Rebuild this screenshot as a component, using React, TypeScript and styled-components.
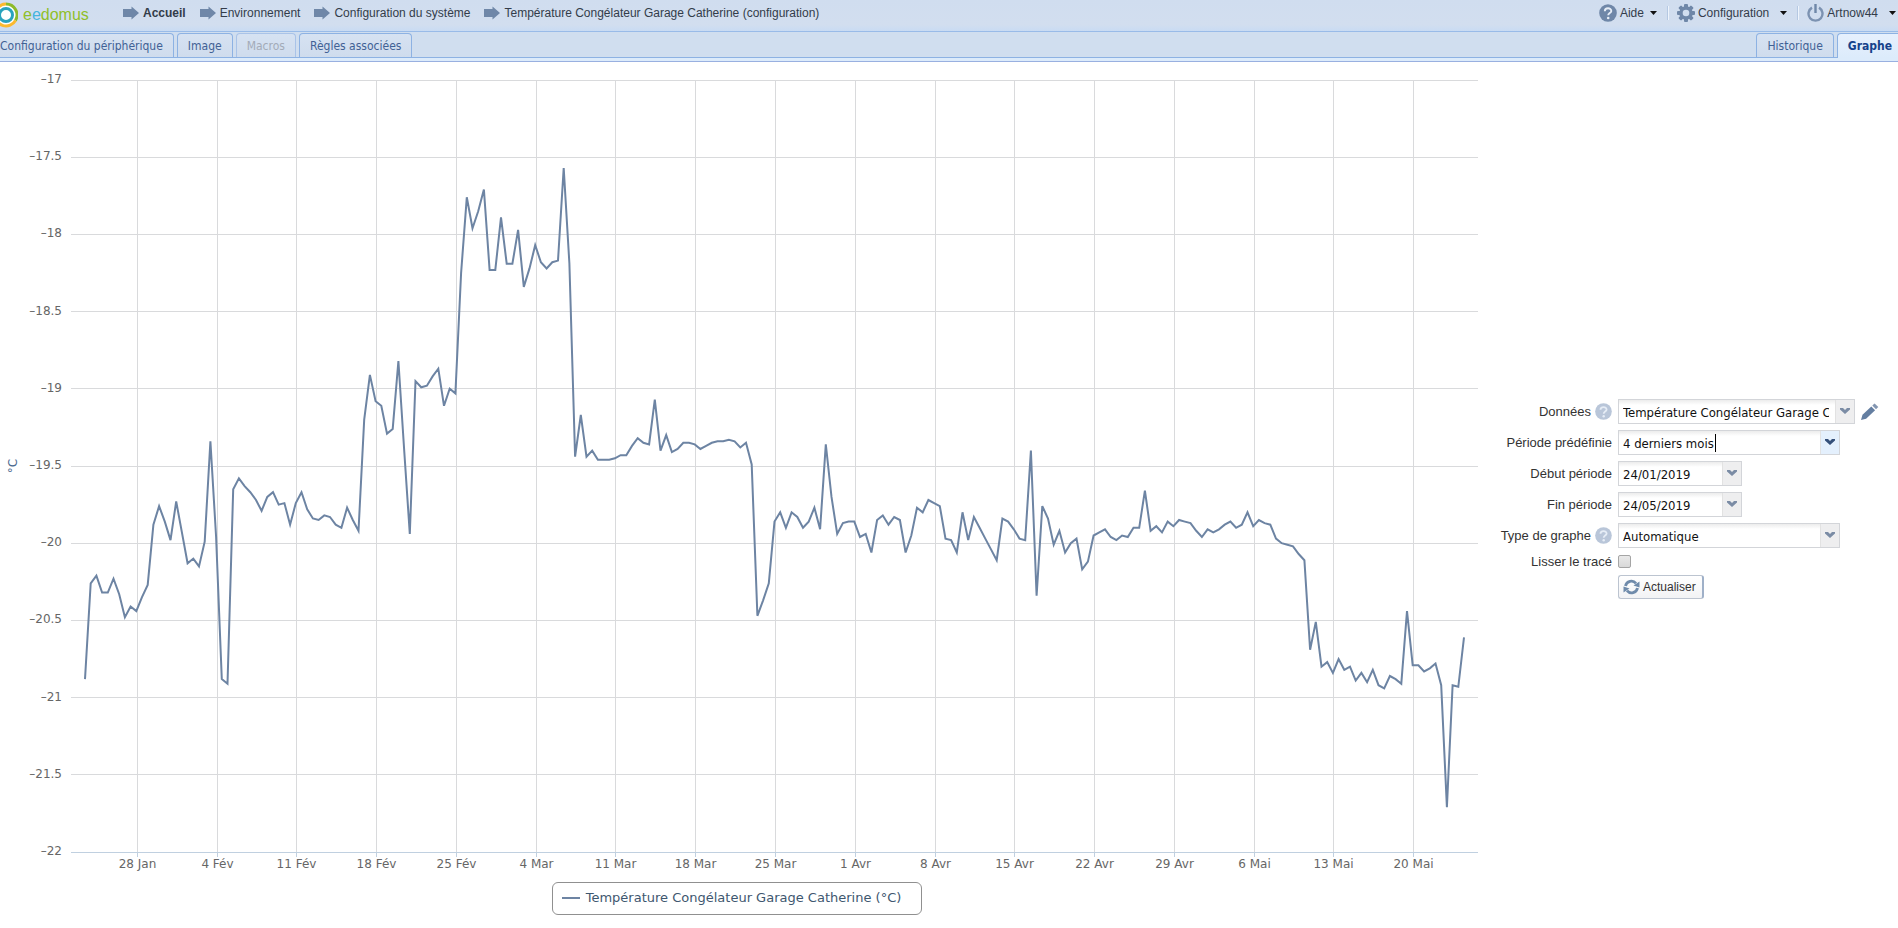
import React, { useLayoutEffect, useRef, useState } from 'react';
import styled, { createGlobalStyle, css } from 'styled-components';

const SANS = '"Liberation Sans", Arial, sans-serif';
const TAHOMA = '"DejaVu Sans Condensed", Tahoma, "DejaVu Sans", sans-serif';
const LUCIDA = '"DejaVu Sans", "Lucida Sans Unicode", sans-serif';
const STEEL = '#6d84a3';

const GlobalStyle = createGlobalStyle`
  * { box-sizing: border-box; }
  html, body { margin: 0; background: #fff; }
  body { overflow: hidden; font-family: ${SANS}; }
  button, input, select { font: inherit; color: inherit; margin: 0; }
`;

/* ---------- page frame ---------- */

const Page = styled.div`
  display: flex;
  flex-direction: column;
  min-height: 100vh;
`;

const Header = styled.header`
  display: flex;
  align-items: center;
  height: 32px;
  padding-bottom: 6px;
  background: linear-gradient(#d0ddef, #d2deef 80%, #c9dbf3);
  border-bottom: 1px solid #99bbe8;
  font-size: 12px;
  color: #333c4a;
`;

const Brand = styled.a`
  display: flex;
  align-items: center;
  gap: 5px;
  width: 123px;
  height: 31px;
  padding-top: 4px;
  font-size: 16px;
  color: #8fbf2a;
  text-decoration: none;
`;

const BrandBlue = styled.span`
  color: #45b4e0;
`;

const Crumbs = styled.nav`
  display: flex;
  gap: 14px;
  flex: 1;
`;

const Crumb = styled.a<{ $strong?: boolean }>`
  display: flex;
  align-items: center;
  gap: 4px;
  color: inherit;
  text-decoration: none;
  font-weight: ${(p) => (p.$strong ? 'bold' : 'normal')};
`;

const Tools = styled.div`
  display: flex;
  align-items: center;
  padding-right: 2px;
`;

const ToolButton = styled.button<{ $wide?: boolean }>`
  display: flex;
  align-items: center;
  gap: 3px;
  padding: 0;
  border: 0;
  background: none;

  & > svg:last-child {
    margin-left: ${(p) => (p.$wide ? '8px' : '3px')};
  }
`;

const Separator = styled.span`
  width: 2px;
  height: 14px;
  margin: 0 8px 0 10px;
  border-left: 1px solid #b5c8e2;
  border-right: 1px solid #eef4fc;
`;

/* ---------- tabs ---------- */

const TabBar = styled.nav`
  display: flex;
  align-items: flex-end;
  height: 30px;
  padding-bottom: 3px;
  background: linear-gradient(#d0deef 26px, #dcebfb 26px);
  border-bottom: 1px solid #99b0e0;
  font-family: ${TAHOMA};
  font-size: 12px;
`;

const TabGroup = styled.div<{ $grow?: boolean }>`
  display: flex;
  align-items: flex-end;
  gap: 3px;
  height: 26px;
  flex: ${(p) => (p.$grow ? '1' : 'none')};
  border-bottom: 1px solid #8db2e3;
`;

const Tab = styled.button<{ $active?: boolean; $edge?: 'left' | 'right' }>`
  height: 24px;
  padding: 0 10px;
  border: 1px solid #8db2e3;
  border-bottom: 0;
  border-radius: 4px 4px 0 0;
  background: linear-gradient(#d6e2f2, #cfdced);
  color: #416195;
  white-space: nowrap;

  &:disabled {
    color: #a3abb8;
    border-color: #a9c3e8;
  }

  ${(p) => p.$edge === 'left' && css`
    padding-left: 0;
    border-left: 0;
    border-top-left-radius: 0;
  `}

  ${(p) => p.$edge === 'right' && css`
    padding-right: 6px;
    border-right: 0;
    border-top-right-radius: 0;
  `}

  ${(p) => p.$active && css`
    height: 25px;
    margin-bottom: -1px;
    background: linear-gradient(#e6f0fd, #dcebfb);
    color: #15428b;
    font-weight: bold;
  `}
`;

/* ---------- content ---------- */

const Content = styled.main`
  display: flex;
  flex: 1;
`;

const ChartPane = styled.section`
  display: flex;
  flex-direction: column;
  align-items: center;
  flex: 1;
  min-width: 0;
  padding-bottom: 13px;
`;

const Plot = styled.div`
  flex: 1;
  align-self: stretch;
  min-height: 300px;
  overflow: hidden;
`;

const PlotSvg = styled.svg`
  display: block;
`;

const AxisText = styled.text`
  font: 12px ${LUCIDA};
  fill: #666;
`;

const AxisTitle = styled.text`
  font: 12px ${LUCIDA};
  fill: #4d6a8f;
`;

const Legend = styled.div`
  display: flex;
  align-items: center;
  gap: 6px;
  height: 33px;
  margin: 7px 16px 0 0;
  padding: 0 20px 2px 9px;
  border: 1px solid #909090;
  border-radius: 6px;
  font: 13px ${LUCIDA};
  color: #3e576f;
  white-space: nowrap;
`;

const LegendKey = styled.span`
  width: 18px;
  height: 2px;
  background: ${STEEL};
`;

/* ---------- settings form ---------- */

const SettingsPane = styled.aside`
  display: flex;
  align-items: center;
  width: 408px;
  flex: none;
  padding-top: 8px;
`;

const Settings = styled.form`
  display: grid;
  grid-template-columns: 122px auto;
  gap: 6px;
  align-items: center;
  font-size: 13px;
  color: #333;
`;

const Label = styled.label`
  display: flex;
  align-items: center;
  justify-content: flex-end;
  gap: 4px;
  white-space: nowrap;
`;

const FieldLine = styled.div`
  display: flex;
  align-items: center;
  gap: 6px;
`;

const Field = styled.div<{ $width: number }>`
  position: relative;
  display: flex;
  width: ${(p) => p.$width}px;
  height: 25px;
  border: 1px solid #d3d5d9;
  background: linear-gradient(#ececec, #fff 5px);
  font-family: ${TAHOMA};
  color: #111;
`;

const control = css`
  flex: 1;
  min-width: 0;
  padding: 2px 2px 0 4px;
  border: 0;
  outline: 0;
  border-radius: 0;
  background: none;
  appearance: none;
`;

const Select = styled.select`
  ${control}
  padding-right: 25px;
`;

const DateInput = styled.input`
  ${control}
`;

const trigger = css<{ $hot?: boolean }>`
  display: flex;
  align-items: center;
  justify-content: center;
  width: 19px;
  padding: 0 0 2px;
  border: 0;
  border-left: 1px solid #e2e2e2;
  background: ${(p) => (p.$hot ? '#e4f0fd' : '#eeeeef')};
  color: ${(p) => (p.$hot ? '#35507a' : '#7b8ca5')};
`;

const Trigger = styled.button`
  ${trigger}
`;

const SelectArrow = styled.span<{ $hot?: boolean }>`
  ${trigger}
  position: absolute;
  top: 0;
  right: 0;
  bottom: 0;
  pointer-events: none;
`;

const Caret = styled.span`
  position: absolute;
  top: 3px;
  left: 96px;
  width: 1px;
  height: 18px;
  background: #000;
`;

const IconButton = styled.button`
  display: flex;
  padding: 0;
  border: 0;
  background: none;
`;

const Check = styled.input`
  appearance: none;
  display: block;
  width: 13px;
  height: 13px;
  margin: 1px 0;
  border: 1px solid #a5a5a5;
  border-radius: 2px;
  background: linear-gradient(#e9e9e9, #d9d9d9);
`;

const Refresh = styled.button`
  grid-column: 2;
  justify-self: start;
  display: flex;
  align-items: center;
  gap: 3px;
  width: 86px;
  height: 24px;
  padding: 0 0 0 4px;
  border: 1px solid #bcc4d0;
  border-right: 2px solid #9fb0c8;
  border-radius: 3px;
  background: linear-gradient(#fff, #f2f3f5);
  font-size: 12px;
`;

/* ---------- icons ---------- */

const Logo = () => (
  <svg width="18" height="26" viewBox="0 0 18 26" aria-hidden="true">
    <circle cx="6" cy="13" r="11" fill="#fff" />
    <path d="M6 2 A11 11 0 0 1 15.500 18.500" fill="none" stroke="#8dba2b" strokeWidth="3" />
    <path d="M15.500 18.500 A11 11 0 0 1 -5 13 A11 11 0 0 1 6 2" fill="none" stroke="#fbb92f" strokeWidth="3" />
    <circle cx="6" cy="13" r="6.500" fill="#fff" stroke="#29a3bd" strokeWidth="3" />
  </svg>
);

const ArrowIcon = () => (
  <svg width="16" height="14" viewBox="0 0 16 14" fill="#6f87a8" aria-hidden="true">
    <path d="M0 3h8.500V.500L16 7l-7.500 6.500V11H0z" />
  </svg>
);

const HelpIcon = ({ size, color }: { size: number; color: string }) => (
  <svg width={size} height={size} viewBox="0 0 18 18" aria-hidden="true">
    <circle cx="9" cy="9" r="8.800" fill={color} />
    <path d="M5.800 7.200C5.800 3.300 12.300 3.400 12.300 6.900C12.300 9 9.200 9.200 9.200 11.300" fill="none" stroke="#e6edf6" strokeWidth="1.900" />
    <circle cx="9.200" cy="14" r="1.300" fill="#e6edf6" />
  </svg>
);

const GearIcon = () => (
  <svg width="18" height="18" viewBox="0 0 18 18" aria-hidden="true">
    <g fill="#6f87a8">
      {[0, 45, 90, 135].map((a) => (
        <rect key={a} x="7" y="0" width="4" height="18" rx="1" transform={`rotate(${a} 9 9)`} />
      ))}
      <circle cx="9" cy="9" r="6.800" />
    </g>
    <circle cx="9" cy="9" r="3.300" fill="#d1deef" />
  </svg>
);

const PowerIcon = () => (
  <svg width="17" height="18" viewBox="0 0 17 18" fill="none" stroke="#7c92b1" strokeWidth="2.400" aria-hidden="true">
    <path d="M5 3.600A7 7 0 1 0 12 3.600" />
    <path d="M8.500 0v9" stroke="#6f87a8" />
  </svg>
);

const MenuArrow = () => (
  <svg width="7" height="4" viewBox="0 0 7 4" fill="#111" aria-hidden="true">
    <path d="M0 0h7L3.500 4z" />
  </svg>
);

const Chevron = () => (
  <svg width="10" height="6" viewBox="0 0 10 6" fill="currentColor" aria-hidden="true">
    <path d="M0 0h3l2 2 2-2h3v1.500L5 6 0 1.500z" />
  </svg>
);

const PencilIcon = () => (
  <svg width="18" height="17" viewBox="0 0 18 17" fill="#647ea1" aria-hidden="true">
    <path d="M0 17l1.500-5.200L10.300 3.400l3.800 3.800-9 8.500z" />
    <path d="M11.300 2.500L13.600.400 17.300 4.100 15 6.300z" fill="#8396b1" />
  </svg>
);

const RefreshIcon = () => (
  <svg width="17" height="16" viewBox="0 0 17 16" aria-hidden="true">
    <g fill="none" stroke="#6f8bab" strokeWidth="2.800">
      <path d="M2.500 7A6 6 0 0 1 13 4.300" />
      <path d="M14.500 9A6 6 0 0 1 4 11.700" />
    </g>
    <path d="M16.500 2.500V8.500L10.500 6.500z M.500 13.500V7.500L6.500 9.500z" fill="#6f8bab" />
  </svg>
);

/* ---------- data ---------- */

/* Half-day averages from 24 January to 24 May, in °C below zero. */
const READINGS = [
  20.88, 20.26, 20.21, 20.32, 20.32, 20.23, 20.33, 20.48, 20.41, 20.44, 20.35, 20.27, 19.88, 19.76, 19.86, 19.98,
  19.73, 19.93, 20.13, 20.1, 20.15, 19.99, 19.34, 19.96, 20.88, 20.91, 19.65, 19.58, 19.63, 19.67, 19.72, 19.79,
  19.7, 19.67, 19.75, 19.74, 19.88, 19.74, 19.67, 19.78, 19.84, 19.85, 19.82, 19.83, 19.88, 19.9, 19.77, 19.85,
  19.92, 19.2, 18.91, 19.08, 19.11, 19.29, 19.26, 18.82, 19.39, 19.94, 18.95, 18.99, 18.98, 18.92, 18.87, 19.11,
  19.0, 19.03, 18.25, 17.76, 17.96, 17.85, 17.71, 18.23, 18.23, 17.89, 18.19, 18.19, 17.97, 18.34, 18.22, 18.07,
  18.18, 18.22, 18.18, 18.17, 17.57, 18.19, 19.44, 19.17, 19.44, 19.4, 19.46, 19.46, 19.46, 19.45, 19.43, 19.43,
  19.37, 19.32, 19.35, 19.36, 19.07, 19.4, 19.3, 19.41, 19.39, 19.35, 19.35, 19.36, 19.39, 19.37, 19.35, 19.34,
  19.34, 19.33, 19.34, 19.38, 19.35, 19.49, 20.47, 20.37, 20.26, 19.86, 19.8, 19.9, 19.8, 19.83, 19.9, 19.86,
  19.77, 19.91, 19.36, 19.7, 19.94, 19.87, 19.86, 19.86, 19.96, 19.94, 20.06, 19.85, 19.82, 19.88, 19.83, 19.85,
  20.06, 19.95, 19.77, 19.8, 19.72, 19.74, 19.76, 19.97, 19.98, 20.06, 19.8, 19.98, 19.83, 19.9, 19.97, 20.04,
  20.11, 19.84, 19.86, 19.91, 19.97, 19.98, 19.4, 20.34, 19.76, 19.84, 20.01, 19.92, 20.06, 20.0, 19.97, 20.17,
  20.12, 19.95, 19.93, 19.91, 19.96, 19.98, 19.95, 19.96, 19.9, 19.9, 19.66, 19.92, 19.89, 19.93, 19.86, 19.89,
  19.85, 19.86, 19.87, 19.92, 19.96, 19.91, 19.93, 19.91, 19.88, 19.86, 19.9, 19.88, 19.8, 19.89, 19.85, 19.87,
  19.88, 19.97, 20.0, 20.01, 20.02, 20.07, 20.11, 20.69, 20.51, 20.8, 20.77, 20.84, 20.75, 20.82, 20.8, 20.89,
  20.84, 20.9, 20.82, 20.92, 20.94, 20.86, 20.88, 20.91, 20.44, 20.79, 20.79, 20.83, 20.81, 20.78, 20.92, 21.71,
  20.92, 20.93, 20.61,
];

const WEEKS = [
  '28 Jan', '4 Fév', '11 Fév', '18 Fév', '25 Fév', '4 Mar', '11 Mar', '18 Mar', '25 Mar',
  '1 Avr', '8 Avr', '15 Avr', '22 Avr', '29 Avr', '6 Mai', '13 Mai', '20 Mai',
];
const FIRST_WEEK_INDEX = 9;
const READINGS_PER_WEEK = 14;

const LEVELS = [17, 17.5, 18, 18.5, 19, 19.5, 20, 20.5, 21, 21.5, 22];
const MARGIN = { top: 18, right: 12, bottom: 23, left: 71 };
const INSET = 14;

const SERIES_NAME = 'Température Congélateur Garage Catherine';

function TemperatureChart() {
  const box = useRef<HTMLDivElement>(null);
  const [size, setSize] = useState({ width: 0, height: 0 });

  useLayoutEffect(() => {
    const el = box.current!;
    const measure = () => setSize({ width: el.clientWidth, height: el.clientHeight });
    measure();
    const observer = new ResizeObserver(measure);
    observer.observe(el);
    return () => observer.disconnect();
  }, []);

  const right = size.width - MARGIN.right;
  const bottom = size.height - MARGIN.bottom;
  const x = (i: number) =>
    MARGIN.left + INSET + (i * (right - MARGIN.left - 2 * INSET)) / (READINGS.length - 1);
  const y = (v: number) => MARGIN.top + ((v - 17) * (bottom - MARGIN.top)) / 5;

  return (
    <Plot ref={box}>
      {size.width > 0 && (
        <PlotSvg width={size.width} height={size.height} role="img" aria-label={SERIES_NAME}>
          {WEEKS.map((week, k) => {
            const wx = Math.ceil(x(FIRST_WEEK_INDEX + k * READINGS_PER_WEEK)) + 0.5;
            return (
              <g key={week}>
                <path d={`M${wx} ${MARGIN.top}V${bottom}`} stroke="#d9dadc" />
                <path d={`M${wx} ${bottom}v5`} stroke="#c0d0e0" />
                <AxisText x={wx} y={bottom + 16} textAnchor="middle">{week}</AxisText>
              </g>
            );
          })}
          {LEVELS.map((level) => (
            <g key={level}>
              <path
                d={`M${MARGIN.left} ${Math.floor(y(level)) + 0.5}H${right}`}
                stroke={level === 22 ? '#c0d0e0' : '#d9dadc'}
              />
              <AxisText x={62} y={Math.round(y(level)) + 3} textAnchor="end">–{level}</AxisText>
            </g>
          ))}
          <AxisTitle textAnchor="middle" transform={`translate(17 ${Math.round(y(19.5))}) rotate(-90)`}>°C</AxisTitle>
          <polyline
            points={READINGS.map((v, i) => `${x(i).toFixed(1)},${y(v).toFixed(1)}`).join(' ')}
            fill="none"
            stroke={STEEL}
            strokeWidth="2"
          />
        </PlotSvg>
      )}
    </Plot>
  );
}

export default function App() {
  return (
    <Page>
      <GlobalStyle />
      <Header>
        <Brand href="#">
          <Logo />
          <span>e<BrandBlue>e</BrandBlue>domus</span>
        </Brand>
        <Crumbs>
          <Crumb href="#" $strong><ArrowIcon />Accueil</Crumb>
          <Crumb href="#"><ArrowIcon />Environnement</Crumb>
          <Crumb href="#"><ArrowIcon />Configuration du système</Crumb>
          <Crumb href="#"><ArrowIcon />{SERIES_NAME} (configuration)</Crumb>
        </Crumbs>
        <Tools>
          <ToolButton type="button"><HelpIcon size={18} color="#6f87a8" />Aide<MenuArrow /></ToolButton>
          <Separator />
          <ToolButton type="button" $wide><GearIcon />Configuration<MenuArrow /></ToolButton>
          <Separator />
          <ToolButton type="button" $wide><PowerIcon />Artnow44<MenuArrow /></ToolButton>
        </Tools>
      </Header>

      <TabBar>
        <TabGroup $grow>
          <Tab type="button" $edge="left">Configuration du périphérique</Tab>
          <Tab type="button">Image</Tab>
          <Tab type="button" disabled>Macros</Tab>
          <Tab type="button">Règles associées</Tab>
        </TabGroup>
        <TabGroup>
          <Tab type="button">Historique</Tab>
          <Tab type="button" $active $edge="right">Graphe</Tab>
        </TabGroup>
      </TabBar>

      <Content>
        <ChartPane>
          <TemperatureChart />
          <Legend><LegendKey />{SERIES_NAME} (°C)</Legend>
        </ChartPane>

        <SettingsPane>
          <Settings onSubmit={(e) => e.preventDefault()}>
            <Label htmlFor="data">Données<HelpIcon size={17} color="#b9c6d9" /></Label>
            <FieldLine>
              <Field $width={237}>
                <Select id="data"><option>{SERIES_NAME}</option></Select>
                <SelectArrow><Chevron /></SelectArrow>
              </Field>
              <IconButton type="button" aria-label="Modifier"><PencilIcon /></IconButton>
            </FieldLine>

            <Label htmlFor="period">Période prédéfinie</Label>
            <Field $width={222}>
              <Select id="period"><option>4 derniers mois</option></Select>
              <Caret />
              <SelectArrow $hot><Chevron /></SelectArrow>
            </Field>

            <Label htmlFor="start">Début période</Label>
            <Field $width={124}>
              <DateInput id="start" type="text" defaultValue="24/01/2019" />
              <Trigger type="button" aria-label="Choisir le début"><Chevron /></Trigger>
            </Field>

            <Label htmlFor="end">Fin période</Label>
            <Field $width={124}>
              <DateInput id="end" type="text" defaultValue="24/05/2019" />
              <Trigger type="button" aria-label="Choisir la fin"><Chevron /></Trigger>
            </Field>

            <Label htmlFor="kind">Type de graphe<HelpIcon size={17} color="#b9c6d9" /></Label>
            <Field $width={222}>
              <Select id="kind"><option>Automatique</option></Select>
              <SelectArrow><Chevron /></SelectArrow>
            </Field>

            <Label htmlFor="smooth">Lisser le tracé</Label>
            <Check id="smooth" type="checkbox" />

            <Refresh type="submit"><RefreshIcon />Actualiser</Refresh>
          </Settings>
        </SettingsPane>
      </Content>
    </Page>
  );
}
